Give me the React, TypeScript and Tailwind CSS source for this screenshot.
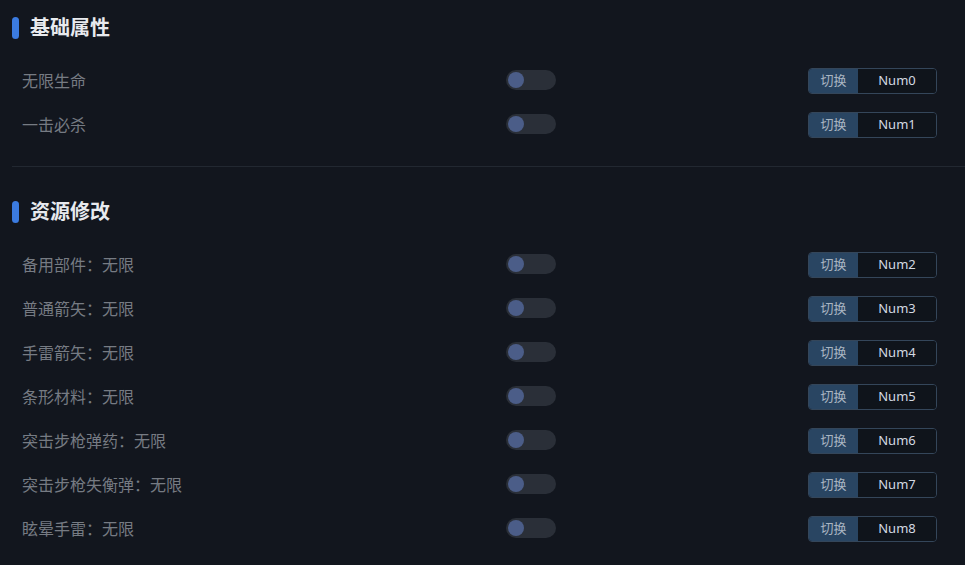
import React, { useState } from 'react';

type Item = { label: string; key: string };

const sections: { title: string; items: Item[] }[] = [
  {
    title: '基础属性',
    items: [
      { label: '无限生命', key: 'Num0' },
      { label: '一击必杀', key: 'Num1' },
    ],
  },
  {
    title: '资源修改',
    items: [
      { label: '备用部件：无限', key: 'Num2' },
      { label: '普通箭矢：无限', key: 'Num3' },
      { label: '手雷箭矢：无限', key: 'Num4' },
      { label: '条形材料：无限', key: 'Num5' },
      { label: '突击步枪弹药：无限', key: 'Num6' },
      { label: '突击步枪失衡弹：无限', key: 'Num7' },
      { label: '眩晕手雷：无限', key: 'Num8' },
    ],
  },
];

const Toggle: React.FC<{ on: boolean; onClick: () => void }> = ({ on, onClick }) => (
  <button
    onClick={onClick}
    className={`flex h-5 w-[50px] items-center rounded-full px-[2px] ${on ? 'bg-[#2f5f9e]' : 'bg-[#2a2f38]'}`}
  >
    <span
      className={`h-4 w-4 rounded-full bg-[#4b5d88] transition-transform ${on ? 'translate-x-[30px] bg-[#9fbbe8]' : ''}`}
    />
  </button>
);

const Row: React.FC<{ item: Item }> = ({ item }) => {
  const [on, setOn] = useState(false);
  return (
    <div className="flex h-11 items-center pl-[10px] pr-[28px]">
      <div className="w-[484px] text-base text-[#767b83]" style={{ fontFamily: '"Noto Sans CJK SC", sans-serif' }}>
        {item.label}
      </div>
      <Toggle on={on} onClick={() => setOn(!on)} />
      <div className="flex-1" />
      <div className="mt-[2px] flex h-[26px] w-[129px] overflow-hidden rounded border border-[#34465a] text-[13px]">
        <div className="flex w-[49px] items-center justify-center bg-[#294562] text-[#a9b5c2]">切换</div>
        <div className="flex flex-1 items-center justify-center bg-[#0f141b] text-[#d3d9e2]">{item.key}</div>
      </div>
    </div>
  );
};

const App: React.FC = () => {
  return (
    <div
      className="min-h-screen bg-[#12161e] pl-3 pt-4"
      style={{ fontFamily: '"Noto Sans", "Noto Sans CJK SC", sans-serif' }}
    >
      {sections.map((s, i) => (
        <div key={s.title}>
          {i > 0 && <div className="mt-5 h-px bg-[#222831]" />}
          <div className={`flex h-6 items-center gap-[11px] ${i === 0 ? '' : 'mt-[33px]'}`}>
            <span className="h-[22px] w-[7px] rounded-full bg-[#3b7be0]" />
            <h2 className="text-xl font-bold text-[#e8eaee]">{s.title}</h2>
          </div>
          <div className="mt-[18px]">
            {s.items.map((it) => (
              <Row key={it.key} item={it} />
            ))}
          </div>
        </div>
      ))}
    </div>
  );
};

export default App;
